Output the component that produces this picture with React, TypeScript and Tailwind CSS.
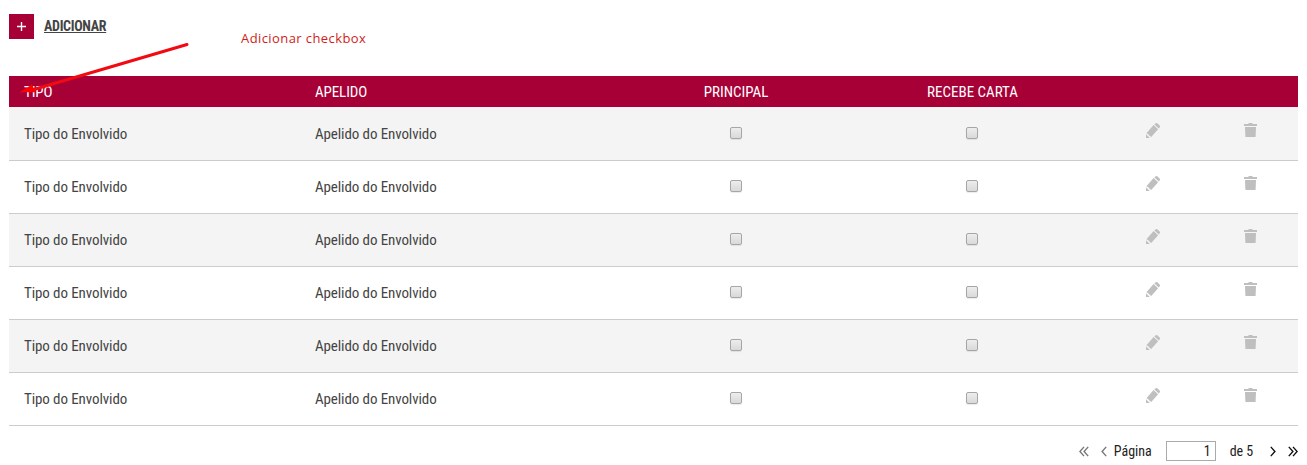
const rows = [1, 2, 3, 4, 5, 6];
const columns = "grid grid-cols-[291px_313px_216px_256px_106px_88px] pl-[15px]";

function Checkbox() {
  return (
    <span
      role="checkbox"
      aria-checked="false"
      className="block h-3 w-3 rounded-[2px] border border-[#a6a6a6] bg-linear-to-b from-[#ededed] to-[#d9d9d9] shadow-[0_1px_1px_rgba(0,0,0,0.08)]"
    />
  );
}

function Pencil() {
  return (
    <svg width="14" height="15" viewBox="0 0 14 15" fill="#bfbfbf">
      <path d="M0 14.9V11.2L3.8 14.9Z" />
      <path d="M.4 10.2L7.6 2L12.1 6.2L5 14.3Q4.8 13 3.2 12.4Q2.4 10.7 .4 10.2Z" />
      <path d="M8.4 1.4L9.3 .5Q10.4-.5 11.6 .5L13.4 2.2Q14.5 3.3 13.6 4.4L12.8 5.4Z" />
    </svg>
  );
}

function Trash() {
  return (
    <svg width="13" height="15" viewBox="0 0 13 15" fill="#bfbfbf">
      <path d="M0 1H4L5 0H8L9 1H13V3H0Z" />
      <path d="M1 4H12L11.6 14H1.4Z" />
    </svg>
  );
}

function Chevron({ double = false, left = false, color }: { double?: boolean; left?: boolean; color: string }) {
  return (
    <svg
      width={double ? 10 : 6}
      height="11"
      viewBox={double ? "0 0 10 11" : "0 0 6 11"}
      fill="none"
      stroke={color}
      strokeWidth="1.4"
      className={left ? "rotate-180" : ""}
    >
      <path d="M.8 .9L4.9 5.5L.8 10.1" />
      {double && <path d="M5 .9L9.1 5.5L5 10.1" />}
    </svg>
  );
}

export default function App() {
  return (
    <main className="relative h-[465px] w-[1307px] overflow-hidden bg-white pl-[9px] pt-[14px] font-['Roboto_Condensed','Roboto',sans-serif] text-[15px] text-[#444] [font-stretch:75%]">
      <div className="flex h-[62px] items-start">
        <button className="flex h-[25px] w-[25px] items-center justify-center bg-[#a70037]">
          <svg width="9" height="9" viewBox="0 0 9 9" stroke="#fff" strokeWidth="1.4">
            <path d="M4.5 0V9M0 4.5H9" />
          </svg>
        </button>
        <a className="ml-[10px] w-[62px] whitespace-nowrap text-[14px] font-bold leading-[25px] tracking-[-0.32px] underline">ADICIONAR</a>
        <span className="ml-[135px] mt-[14px] whitespace-nowrap font-['Open_Sans',sans-serif] text-[13px] leading-5 tracking-[0.41px] text-[#d01c20] [font-stretch:100%]">
          Adicionar checkbox
        </span>
      </div>

      <section className="w-[1289px]">
        <div className={`${columns} h-[31px] items-center bg-[#a70037] pt-px text-white`}>
          <span className="tracking-[-0.1px]">TIPO</span>
          <span className="tracking-[-0.1px]">APELIDO</span>
          <span className="text-center">PRINCIPAL</span>
          <span className="pl-px text-center">RECEBE CARTA</span>
        </div>
        {rows.map((row) => (
          <div
            key={row}
            className={`${columns} h-[53px] items-center border-b border-[#ccc] tracking-[-0.1px] nth-2:h-[54px] nth-2:pt-px even:bg-[#f4f4f4]`}
          >
            <span>Tipo do Envolvido</span>
            <span>Apelido do Envolvido</span>
            <span className="flex justify-center pb-[2px]"><Checkbox /></span>
            <span className="flex justify-center pb-[2px]"><Checkbox /></span>
            <span className="flex justify-center pb-[7px]"><Pencil /></span>
            <span className="flex justify-center pb-[7px]"><Trash /></span>
          </div>
        ))}
      </section>

      <footer className="mt-[15px] flex h-5 w-[1289px] items-center justify-end text-[14px] text-[#222]">
        <Chevron double left color="#777" />
        <span className="ml-3"><Chevron left color="#777" /></span>
        <span className="ml-[7px]">Página</span>
        <span className="ml-[14px] h-5 w-[50px] border border-[#aaa] pr-1 text-right leading-[19px]">1</span>
        <span className="ml-[14px] tracking-[-0.1px]">de 5</span>
        <span className="ml-[17px]"><Chevron color="#111" /></span>
        <span className="ml-3"><Chevron double color="#111" /></span>
      </footer>

      <svg className="absolute left-0 top-0" width="200" height="110" fill="none">
        <path d="M187 44.5L32 90" stroke="#f20a12" strokeWidth="3" strokeLinecap="round" />
        <path d="M19.5 92.3L32 84.5L35.5 92.3Z" fill="#f00" />
      </svg>
    </main>
  );
}
